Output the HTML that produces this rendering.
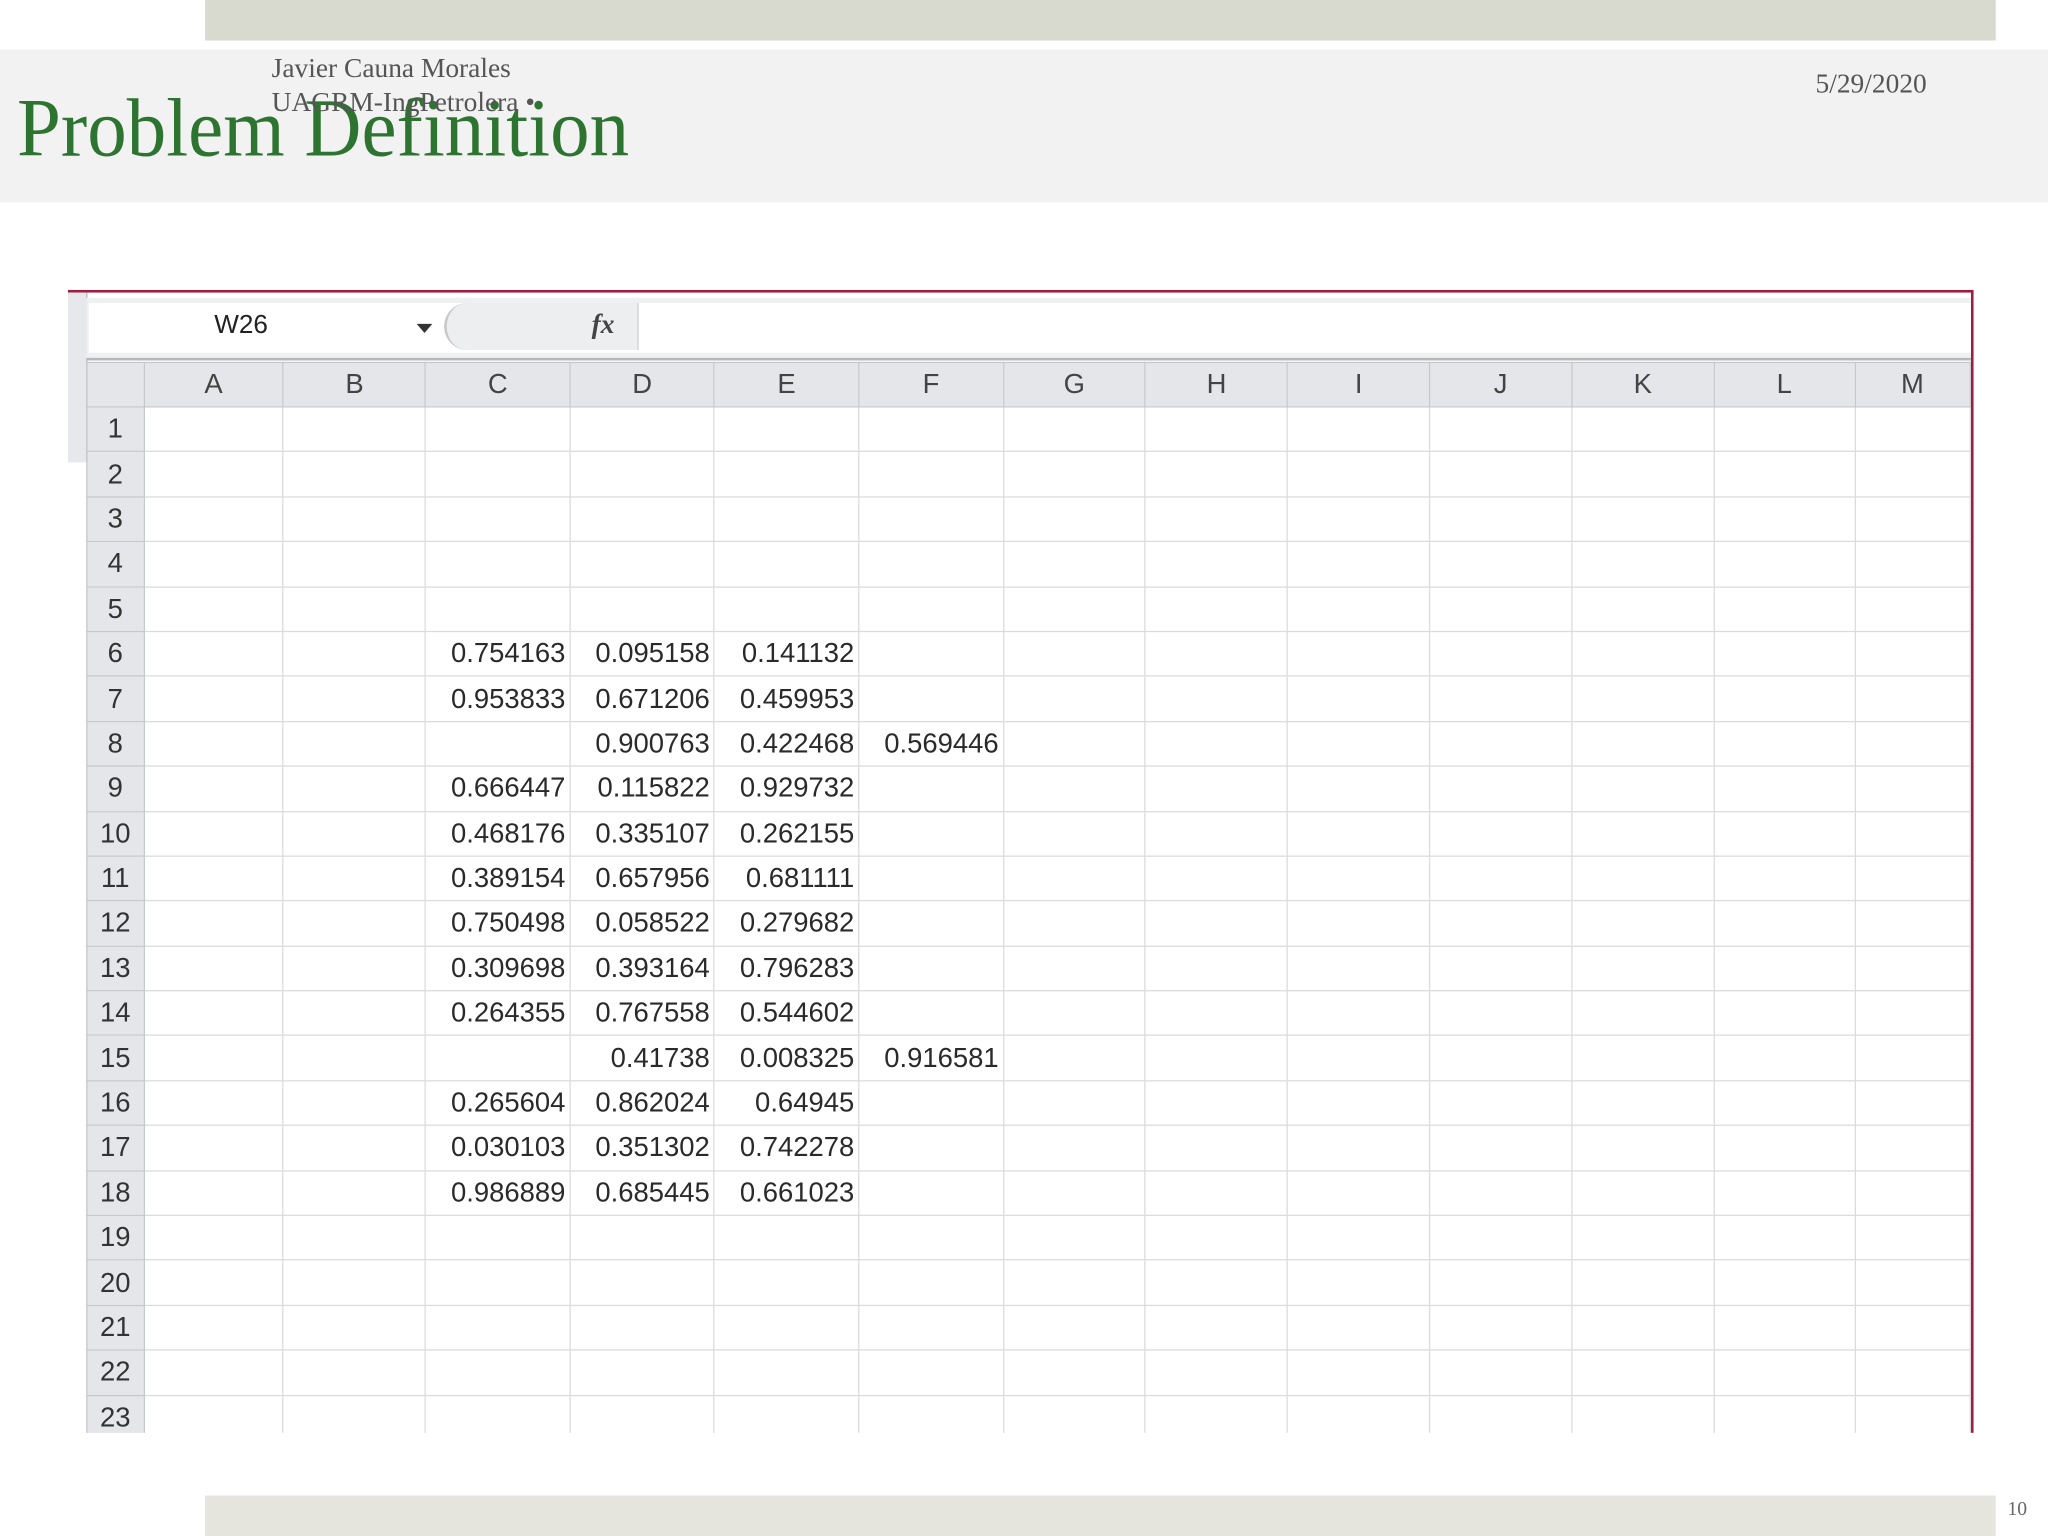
<!DOCTYPE html>
<html><head><meta charset="utf-8"><style>
html,body{margin:0;padding:0;background:#fff;overflow:hidden}
#w{width:2048px;height:1536px;overflow:hidden;position:relative}
#s{position:absolute;left:0;top:0;width:1568px;height:1176px;transform:scale(1.306122);transform-origin:0 0;font-family:"Liberation Serif",serif}
.a{position:absolute}
table{border-collapse:collapse;table-layout:fixed;font-family:"Liberation Sans",sans-serif;font-size:21px;color:#2a2a2a}
td{border:1px solid #dcdcdc;height:33.4px;padding:0 3px 0 0;text-align:right;white-space:nowrap;overflow:hidden;line-height:33px}
td.h{background:#e4e6ea;text-align:center;border-color:#c6c8cc;color:#333;padding:0}
tr.ch td{background:#e4e6ea;text-align:center;border-color:#c6c8cc;color:#444;height:32px;padding:0}
</style></head><body><div id="w"><div id="s">
<div class="a" style="left:157px;top:0;width:1371px;height:31px;background:#d9dacf"></div>
<div class="a" style="left:0;top:38px;width:1568px;height:117px;background:#f2f2f2"></div>
<div class="a" style="left:13px;top:60px;font-size:63px;color:#2e7431;line-height:76px;white-space:nowrap;transform:scaleX(0.96);transform-origin:0 0">Problem Definition</div>
<div class="a" style="left:208px;top:39px;font-size:21px;color:#555;line-height:26px;white-space:nowrap">Javier Cauna Morales<br>UAGRM-IngPetrolera •</div>
<div class="a" style="left:1390px;top:51px;font-size:21px;color:#555;line-height:26px">5/29/2020</div>
<div class="a" style="left:157px;top:1145px;width:1371px;height:31px;background:#e5e5dd"></div>
<div class="a" style="left:1537px;top:1148px;font-size:15px;color:#666">10</div>

<div class="a" style="left:52px;top:222px;width:1459px;height:875px;background:#fff;overflow:hidden;border-top:2px solid #9e1e42;border-right:2px solid #9e1e42;box-sizing:border-box">
 <div class="a" style="left:0;top:0;width:14px;height:130px;background:#e6e8ec;border-right:1px solid #bbb"></div>
 <div class="a" style="left:14px;top:4px;width:1443px;height:46px;background:#eef0f2;border-bottom:2px solid #b8b8b8"></div>
 <div class="a" style="left:16px;top:8px;width:1441px;height:38px;background:#fff"></div>
 <div class="a" style="left:112px;top:14px;font-family:'Liberation Sans',sans-serif;font-size:20px;color:#222">W26</div>
 <div class="a" style="left:267px;top:24px;width:0;height:0;border-left:6px solid transparent;border-right:6px solid transparent;border-top:7px solid #333"></div>
 <div class="a" style="left:288px;top:8px;width:146px;height:36px;background:#eceef0;border-radius:18px 0 0 18px;border-left:2px solid #c8c8c8;border-right:1px solid #c8c8c8"></div>
 <div class="a" style="left:401px;top:12px;font-size:21px;font-style:italic;font-weight:bold;color:#444">fx</div>
 <div class="a" style="left:14px;top:53px">
 <table>
 <colgroup><col style="width:44px"><col style="width:109px"><col style="width:111px"><col style="width:111px"><col style="width:111px"><col style="width:111px"><col style="width:111px"><col style="width:111px"><col style="width:111px"><col style="width:111px"><col style="width:111px"><col style="width:111px"><col style="width:110px"><col style="width:90px"></colgroup>
 <tr class="ch"><td></td><td>A</td><td>B</td><td>C</td><td>D</td><td>E</td><td>F</td><td>G</td><td>H</td><td>I</td><td>J</td><td>K</td><td>L</td><td>M</td></tr>
 <tr><td class="h">1</td><td></td><td></td><td></td><td></td><td></td><td></td><td></td><td></td><td></td><td></td><td></td><td></td><td></td></tr>
 <tr><td class="h">2</td><td></td><td></td><td></td><td></td><td></td><td></td><td></td><td></td><td></td><td></td><td></td><td></td><td></td></tr>
 <tr><td class="h">3</td><td></td><td></td><td></td><td></td><td></td><td></td><td></td><td></td><td></td><td></td><td></td><td></td><td></td></tr>
 <tr><td class="h">4</td><td></td><td></td><td></td><td></td><td></td><td></td><td></td><td></td><td></td><td></td><td></td><td></td><td></td></tr>
 <tr><td class="h">5</td><td></td><td></td><td></td><td></td><td></td><td></td><td></td><td></td><td></td><td></td><td></td><td></td><td></td></tr>
 <tr><td class="h">6</td><td></td><td></td><td>0.754163</td><td>0.095158</td><td>0.141132</td><td></td><td></td><td></td><td></td><td></td><td></td><td></td><td></td></tr>
 <tr><td class="h">7</td><td></td><td></td><td>0.953833</td><td>0.671206</td><td>0.459953</td><td></td><td></td><td></td><td></td><td></td><td></td><td></td><td></td></tr>
 <tr><td class="h">8</td><td></td><td></td><td></td><td>0.900763</td><td>0.422468</td><td>0.569446</td><td></td><td></td><td></td><td></td><td></td><td></td><td></td></tr>
 <tr><td class="h">9</td><td></td><td></td><td>0.666447</td><td>0.115822</td><td>0.929732</td><td></td><td></td><td></td><td></td><td></td><td></td><td></td><td></td></tr>
 <tr><td class="h">10</td><td></td><td></td><td>0.468176</td><td>0.335107</td><td>0.262155</td><td></td><td></td><td></td><td></td><td></td><td></td><td></td><td></td></tr>
 <tr><td class="h">11</td><td></td><td></td><td>0.389154</td><td>0.657956</td><td>0.681111</td><td></td><td></td><td></td><td></td><td></td><td></td><td></td><td></td></tr>
 <tr><td class="h">12</td><td></td><td></td><td>0.750498</td><td>0.058522</td><td>0.279682</td><td></td><td></td><td></td><td></td><td></td><td></td><td></td><td></td></tr>
 <tr><td class="h">13</td><td></td><td></td><td>0.309698</td><td>0.393164</td><td>0.796283</td><td></td><td></td><td></td><td></td><td></td><td></td><td></td><td></td></tr>
 <tr><td class="h">14</td><td></td><td></td><td>0.264355</td><td>0.767558</td><td>0.544602</td><td></td><td></td><td></td><td></td><td></td><td></td><td></td><td></td></tr>
 <tr><td class="h">15</td><td></td><td></td><td></td><td>0.41738</td><td>0.008325</td><td>0.916581</td><td></td><td></td><td></td><td></td><td></td><td></td><td></td></tr>
 <tr><td class="h">16</td><td></td><td></td><td>0.265604</td><td>0.862024</td><td>0.64945</td><td></td><td></td><td></td><td></td><td></td><td></td><td></td><td></td></tr>
 <tr><td class="h">17</td><td></td><td></td><td>0.030103</td><td>0.351302</td><td>0.742278</td><td></td><td></td><td></td><td></td><td></td><td></td><td></td><td></td></tr>
 <tr><td class="h">18</td><td></td><td></td><td>0.986889</td><td>0.685445</td><td>0.661023</td><td></td><td></td><td></td><td></td><td></td><td></td><td></td><td></td></tr>
 <tr><td class="h">19</td><td></td><td></td><td></td><td></td><td></td><td></td><td></td><td></td><td></td><td></td><td></td><td></td><td></td></tr>
 <tr><td class="h">20</td><td></td><td></td><td></td><td></td><td></td><td></td><td></td><td></td><td></td><td></td><td></td><td></td><td></td></tr>
 <tr><td class="h">21</td><td></td><td></td><td></td><td></td><td></td><td></td><td></td><td></td><td></td><td></td><td></td><td></td><td></td></tr>
 <tr><td class="h">22</td><td></td><td></td><td></td><td></td><td></td><td></td><td></td><td></td><td></td><td></td><td></td><td></td><td></td></tr>
 <tr><td class="h">23</td><td></td><td></td><td></td><td></td><td></td><td></td><td></td><td></td><td></td><td></td><td></td><td></td><td></td></tr>
 </table>
 </div>
</div>
</div></div></body></html>
